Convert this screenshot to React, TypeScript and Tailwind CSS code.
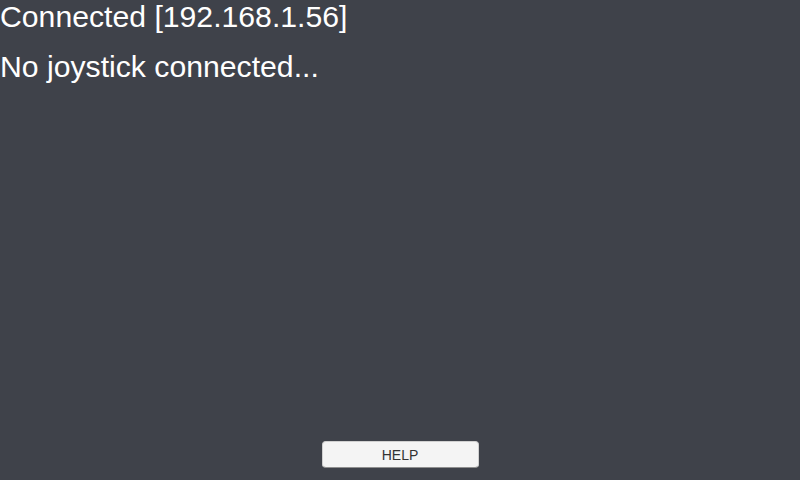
export default function App() {
  return (
    <div
      className="w-[800px] h-[480px] bg-[#3f424a] flex flex-col text-white overflow-hidden"
      style={{ fontFamily: '"Liberation Sans", Arial, sans-serif' }}
    >
      <p className="text-[30.2px] leading-[34px]">Connected [192.168.1.56]</p>
      <p className="mt-4 text-[30.2px] leading-[34px]">No joystick connected...</p>
      <div className="mt-auto mb-3 flex justify-center">
        <button className="w-[157px] h-[27px] bg-[#f4f4f4] border border-[#d0d0d0] border-b-[#8f8f8f] rounded-[4px] text-[14px] text-[#333333] leading-none">
          HELP
        </button>
      </div>
    </div>
  )
}
